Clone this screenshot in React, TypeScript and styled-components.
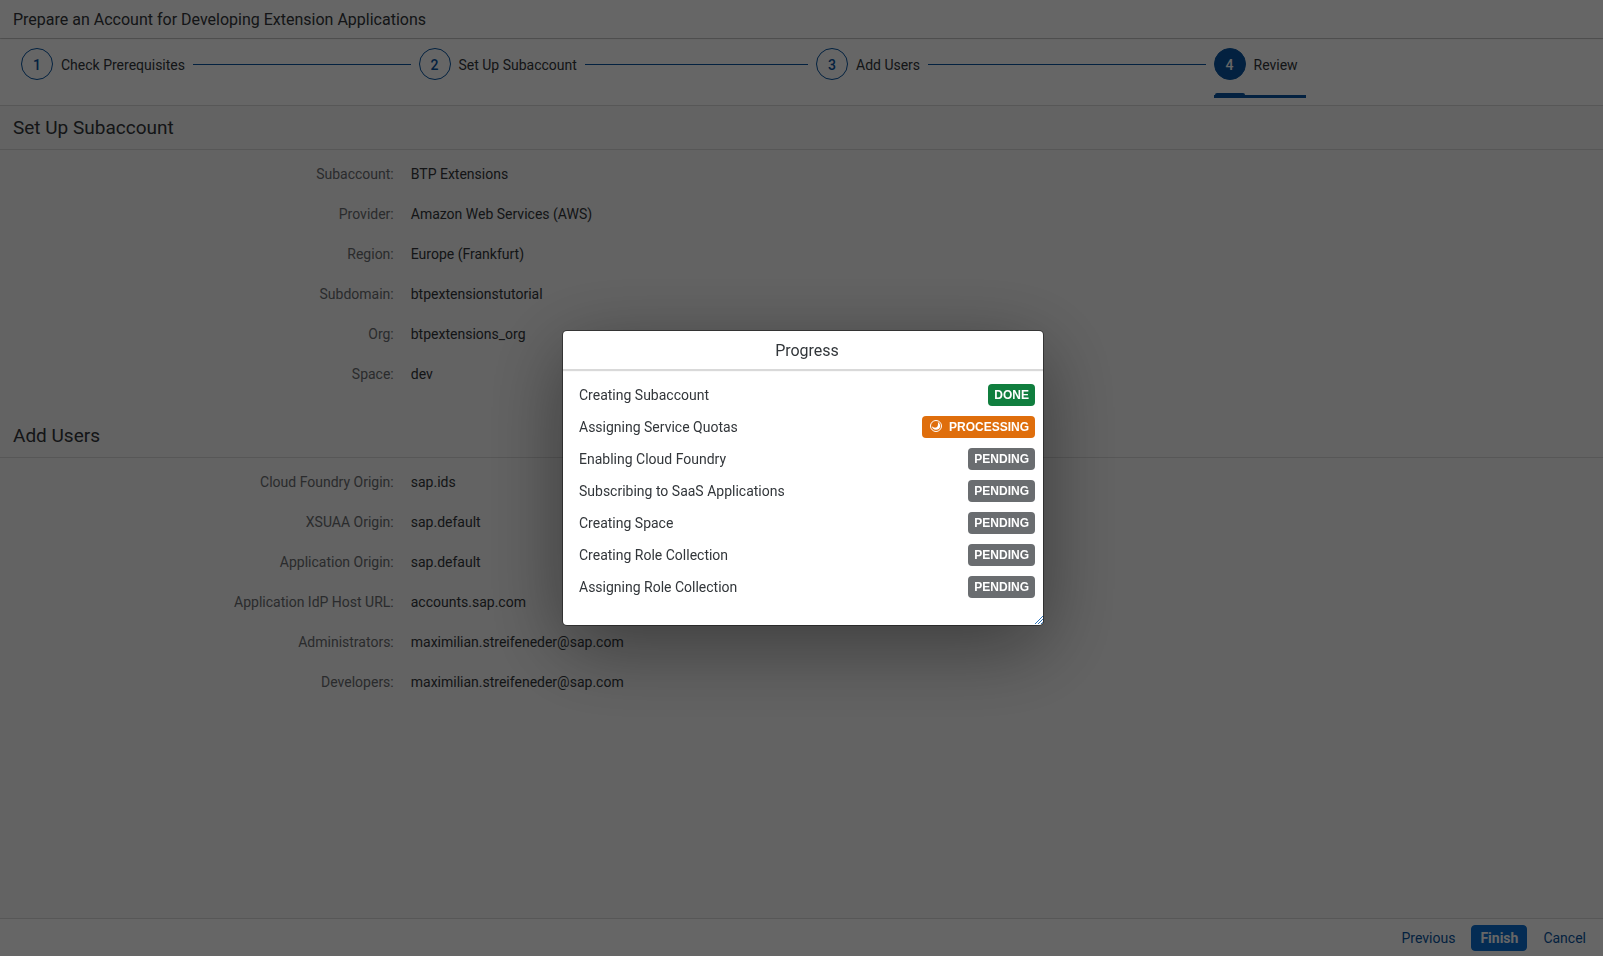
import React from "react";
import styled, { createGlobalStyle, css } from "styled-components";

const GlobalStyle = createGlobalStyle`
  *, *::before, *::after { box-sizing: border-box; }
  body {
    margin: 0;
    background: #f7f7f7;
    color: #32363a;
    font-family: Roboto, "Liberation Sans", sans-serif;
    font-size: 14px;
    line-height: 20px;
  }
`;

const Page = styled.div`
  display: flex;
  flex-direction: column;
  min-height: 100vh;
`;

const PageHeader = styled.header`
  position: relative;
  z-index: 1;
  height: 38px;
  padding: 0 13px;
  background: #fff;
  box-shadow: 0 0 2px rgba(0, 0, 0, 0.3), 0 1px 0 #d9d9d9;
`;

const PageTitle = styled.h1`
  margin: 0;
  font-size: 16px;
  font-weight: 400;
  line-height: 40px;
`;

const WizardNav = styled.nav`
  background: #fff;
  border-bottom: 1px solid #d9d9d9;
  padding: 10px 0 0 21px;
`;

const StepList = styled.ol`
  display: grid;
  grid-template-columns: repeat(4, 1fr);
  column-gap: 8px;
  list-style: none;
  margin: 0;
  padding: 0;
`;

const Step = styled.li`
  display: flex;
  align-items: flex-start;
  height: 57px;
`;

const StepLink = styled.a<{ $current: boolean }>`
  position: relative;
  display: flex;
  gap: 8px;
  height: 50px;
  padding-right: 8px;
  color: inherit;
  line-height: 34px;
  text-decoration: none;
  ${(p) =>
    p.$current &&
    css`
      border-bottom: 3px solid #0854a0;
      &::after {
        content: "";
        position: absolute;
        left: 1px;
        bottom: -1px;
        width: 30px;
        height: 3px;
        border-radius: 2px 2px 0 0;
        background: #0854a0;
      }
    `}
`;

const StepNumber = styled.span<{ $current: boolean }>`
  width: 32px;
  height: 32px;
  border: 1px solid #0854a0;
  border-radius: 50%;
  background: ${(p) => (p.$current ? "#0854a0" : "#fff")};
  color: ${(p) => (p.$current ? "#fff" : "#0854a0")};
  font-weight: 500;
  line-height: 32px;
  text-align: center;
`;

const StepLine = styled.span`
  flex: 1;
  height: 1px;
  margin-top: 16px;
  background: #0854a0;
`;

const Content = styled.main`
  flex: 1;
`;

const Section = styled.section`
  padding-bottom: 20px;
`;

const SectionTitle = styled.h2`
  margin: 0 0 4px;
  padding: 0 13px;
  border-bottom: 1px solid #d9d9d9;
  font-size: 19px;
  font-weight: 400;
  line-height: 43px;
`;

const Fields = styled.dl`
  margin: 0;
`;

const Field = styled.div`
  display: grid;
  grid-template-columns: 1fr 3fr;
  line-height: 40px;
`;

const FieldLabel = styled.dt`
  padding-right: 7px;
  color: #6a6d70;
  text-align: right;
`;

const FieldValue = styled.dd`
  margin: 0;
  padding-left: 10px;
`;

const Footer = styled.footer`
  display: flex;
  align-items: center;
  justify-content: flex-end;
  gap: 8px;
  height: 38px;
  padding: 0 9px;
  border-top: 1px solid #d9d9d9;
  background: #fff;
`;

const Button = styled.button<{ $primary?: boolean }>`
  height: 26px;
  padding: 0 ${(p) => (p.$primary ? "8px" : "7px")};
  border: 1px solid ${(p) => (p.$primary ? "#0a6ed1" : "transparent")};
  border-radius: 4px;
  background: ${(p) => (p.$primary ? "#0a6ed1" : "transparent")};
  color: ${(p) => (p.$primary ? "#fff" : "#0854a0")};
  font: inherit;
  font-weight: ${(p) => (p.$primary ? 700 : 400)};
  line-height: 24px;
`;

const Backdrop = styled.div`
  position: fixed;
  inset: 0;
  z-index: 2;
  display: flex;
  align-items: center;
  justify-content: center;
  padding-left: 3px;
  background: rgba(0, 0, 0, 0.6);
`;

const Dialog = styled.div`
  position: relative;
  width: 480px;
  overflow: hidden;
  border-radius: 4px;
  background: #fff;
  box-shadow: 0 0 0 1px rgba(0, 0, 0, 0.42), 0 20px 80px rgba(0, 0, 0, 0.42);
`;

const DialogHeader = styled.header`
  height: 39px;
  padding-left: 8px;
  border-bottom: 1px solid #d9d9d9;
  box-shadow: 0 1px 1px rgba(0, 0, 0, 0.15);
`;

const DialogTitle = styled.h2`
  margin: 0;
  font-size: 16px;
  font-weight: 400;
  line-height: 40px;
  text-align: center;
`;

const TaskList = styled.ul`
  list-style: none;
  margin: 0;
  padding: 9px 8px 22px 16px;
`;

const Task = styled.li`
  display: flex;
  align-items: center;
  justify-content: space-between;
  height: 32px;
`;

type Status = "DONE" | "PROCESSING" | "PENDING";

const statusColor: Record<Status, string> = {
  DONE: "#107e3e",
  PROCESSING: "#df6e0c",
  PENDING: "#6a6d70",
};

const Badge = styled.span<{ $status: Status }>`
  display: flex;
  align-items: center;
  height: 22px;
  padding: 0 6px;
  border-radius: 4px;
  background: ${(p) => statusColor[p.$status]};
  color: #fff;
  font-family: "Liberation Sans", Arial, sans-serif;
  font-size: 12px;
  font-weight: 700;
`;

const SpinnerIcon = styled.svg`
  margin: 0 6px 3px 1px;
`;

const ResizeHandle = styled.svg`
  position: absolute;
  right: 0;
  bottom: 1px;
`;

const steps = ["Check Prerequisites", "Set Up Subaccount", "Add Users", "Review"];
const currentStep = 3;

const sections = [
  {
    title: "Set Up Subaccount",
    fields: [
      ["Subaccount:", "BTP Extensions"],
      ["Provider:", "Amazon Web Services (AWS)"],
      ["Region:", "Europe (Frankfurt)"],
      ["Subdomain:", "btpextensionstutorial"],
      ["Org:", "btpextensions_org"],
      ["Space:", "dev"],
    ],
  },
  {
    title: "Add Users",
    fields: [
      ["Cloud Foundry Origin:", "sap.ids"],
      ["XSUAA Origin:", "sap.default"],
      ["Application Origin:", "sap.default"],
      ["Application IdP Host URL:", "accounts.sap.com"],
      ["Administrators:", "maximilian.streifeneder@sap.com"],
      ["Developers:", "maximilian.streifeneder@sap.com"],
    ],
  },
];

const tasks: { name: string; status: Status }[] = [
  { name: "Creating Subaccount", status: "DONE" },
  { name: "Assigning Service Quotas", status: "PROCESSING" },
  { name: "Enabling Cloud Foundry", status: "PENDING" },
  { name: "Subscribing to SaaS Applications", status: "PENDING" },
  { name: "Creating Space", status: "PENDING" },
  { name: "Creating Role Collection", status: "PENDING" },
  { name: "Assigning Role Collection", status: "PENDING" },
];

function ProgressDialog() {
  return (
    <Backdrop>
      <Dialog role="dialog" aria-modal="true" aria-labelledby="progress-title">
        <DialogHeader>
          <DialogTitle id="progress-title">Progress</DialogTitle>
        </DialogHeader>
        <TaskList>
          {tasks.map((task) => (
            <Task key={task.name}>
              <span>{task.name}</span>
              <Badge $status={task.status}>
                {task.status === "PROCESSING" && (
                  <SpinnerIcon width="14" height="14" viewBox="0 0 14 14" fill="none" aria-hidden="true">
                    <circle cx="7" cy="7" r="5.5" stroke="#fff" strokeWidth="1" />
                    <path d="M2.8 7.2A4.3 4.3 0 0 0 11.2 7.4C11.3 5.4 10.3 3.8 8.8 3.1C9.3 5.2 9 8.2 7 8.6C5.2 8.9 4 8.2 2.8 7.2Z" fill="#fff" />
                  </SpinnerIcon>
                )}
                {task.status}
              </Badge>
            </Task>
          ))}
        </TaskList>
        <ResizeHandle width="8" height="9" viewBox="0 0 8 9" stroke="#2f74ba" strokeWidth="1" aria-hidden="true">
          <path d="M0 9 8 1M3 9 8 4M6 9 8 7" />
        </ResizeHandle>
      </Dialog>
    </Backdrop>
  );
}

export default function App() {
  return (
    <>
      <GlobalStyle />
      <Page>
        <PageHeader>
          <PageTitle>Prepare an Account for Developing Extension Applications</PageTitle>
        </PageHeader>
        <WizardNav aria-label="Wizard steps">
          <StepList>
            {steps.map((label, i) => (
              <Step key={label}>
                <StepLink href={`#step-${i + 1}`} $current={i === currentStep} aria-current={i === currentStep ? "step" : undefined}>
                  <StepNumber $current={i === currentStep}>{i + 1}</StepNumber>
                  <span>{label}</span>
                </StepLink>
                {i < steps.length - 1 && <StepLine />}
              </Step>
            ))}
          </StepList>
        </WizardNav>
        <Content>
          {sections.map((section) => (
            <Section key={section.title}>
              <SectionTitle>{section.title}</SectionTitle>
              <Fields>
                {section.fields.map(([label, value]) => (
                  <Field key={label}>
                    <FieldLabel>{label}</FieldLabel>
                    <FieldValue>{value}</FieldValue>
                  </Field>
                ))}
              </Fields>
            </Section>
          ))}
        </Content>
        <Footer>
          <Button type="button">Previous</Button>
          <Button type="button" $primary>
            Finish
          </Button>
          <Button type="button">Cancel</Button>
        </Footer>
      </Page>
      <ProgressDialog />
    </>
  );
}
